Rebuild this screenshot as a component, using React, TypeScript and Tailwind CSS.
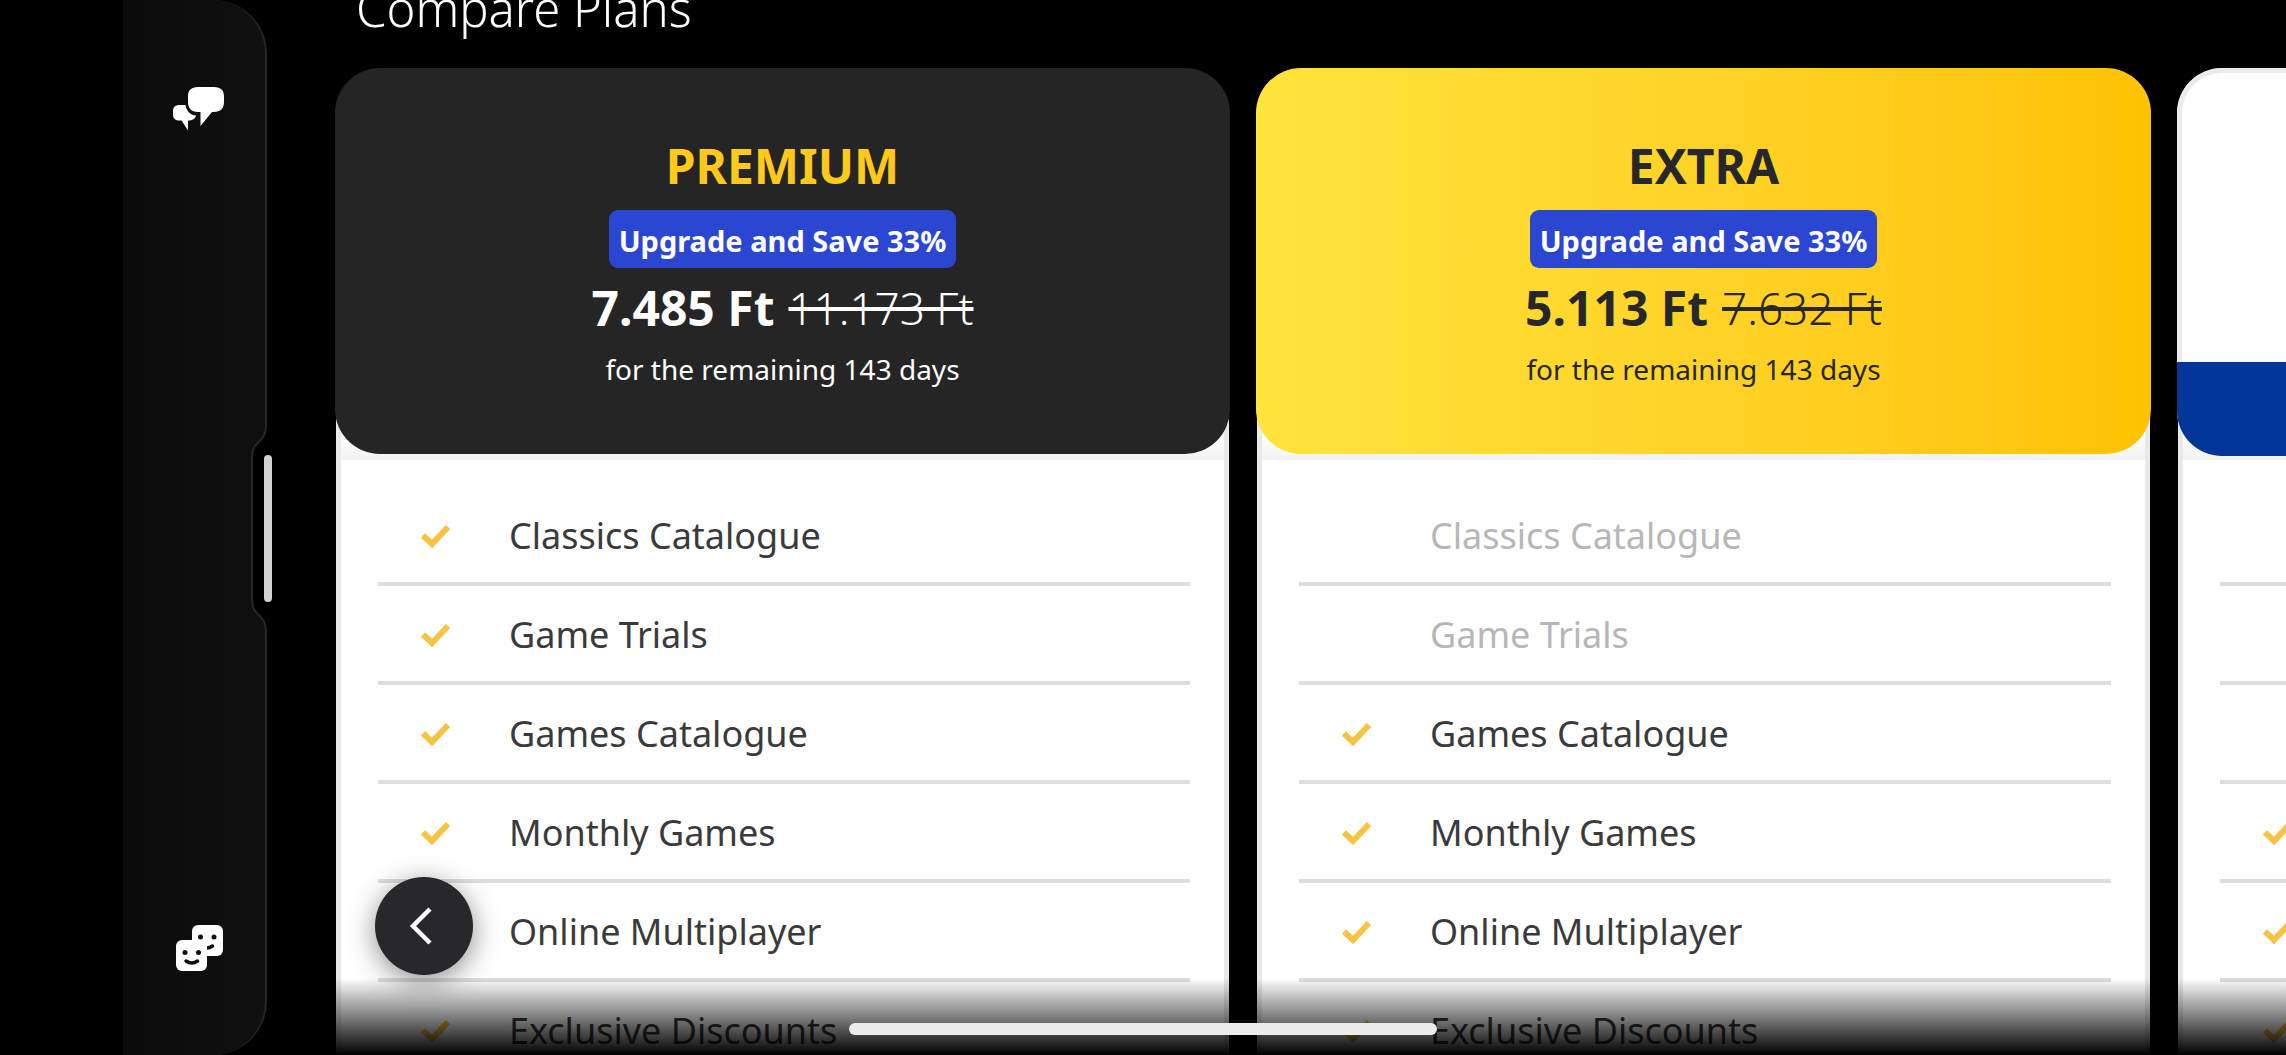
import React from "react";

type Plan = {
  name: string;
  tone: string;
  titleColor: string;
  price?: string;
  oldPrice?: string;
  included: number;
};

const FEATURES = [
  "Classics Catalogue",
  "Game Trials",
  "Games Catalogue",
  "Monthly Games",
  "Online Multiplayer",
  "Exclusive Discounts",
];

// `included` counts from the end of the feature list.
const PLANS: Plan[] = [
  {
    name: "PREMIUM",
    tone: "bg-[#252525] text-white",
    titleColor: "text-[#ffc91c]",
    price: "7.485 Ft",
    oldPrice: "11.173 Ft",
    included: 6,
  },
  {
    name: "EXTRA",
    tone: "bg-linear-to-r from-[#ffe43b] to-[#fec200] text-[#27272b]",
    titleColor: "text-[#27272b]",
    price: "5.113 Ft",
    oldPrice: "7.632 Ft",
    included: 4,
  },
  { name: "", tone: "", titleColor: "", included: 3 },
];

function ChatIcon() {
  return (
    <svg width="52" height="46" viewBox="173 86 52 46" fill="#fff" aria-hidden="true">
      <path d="M198 87h16c7 0 10 3.500 10 9.500v5.500c0 6.500-3.500 10-10 10h-2L200.500 126V112H198c-7 0-10-4-10-10v-5.500c0-6 3-9.500 10-9.500z" />
      <path d="M179.500 105H185.500C186.500 111 190 115 196 115.500C195.500 118.500 192.500 120.500 188 120.500V130.500L181.500 120.500H179.500C175.500 120.500 173 118.500 173 115v-4c0-4 2.500-6 6.500-6z" />
    </svg>
  );
}

function FacesIcon() {
  return (
    <svg width="48" height="48" viewBox="175 923 48 48" aria-hidden="true">
      <rect x="191" y="924" width="31" height="31" rx="6" fill="#fff" />
      <g fill="#0e0e0e">
        <circle cx="199.500" cy="936" r="2.500" />
        <circle cx="213" cy="936" r="2.500" />
      </g>
      <path d="M200 945q6 4 11.500 0" fill="none" stroke="#0e0e0e" strokeWidth="3.500" strokeLinecap="round" />
      <rect x="175" y="939" width="31" height="31" rx="6" fill="#fff" />
      <g fill="#0e0e0e">
        <circle cx="184" cy="951.500" r="2.500" />
        <circle cx="197.500" cy="951.500" r="2.500" />
      </g>
      <path d="M185 960q6 4 11.500 0" fill="none" stroke="#0e0e0e" strokeWidth="3.500" strokeLinecap="round" />
    </svg>
  );
}

function Check() {
  return (
    <svg width="30" height="24" viewBox="0 0 30 24" fill="none" stroke="#f6c343" strokeWidth="6" aria-label="Included">
      <path d="M2 11.500L11 20L27 3" />
    </svg>
  );
}

function SideRail() {
  return (
    <aside className="ml-[123px] flex h-full w-36 shrink-0 flex-col">
      <div className="flex flex-1 justify-center rounded-tr-[54px] border-r-2 border-[#26262b] bg-linear-to-r from-[#0b0b0b] to-[#101010] pt-[85px] pl-2.5">
        <button type="button" aria-label="Chat" className="h-12 w-[52px]">
          <ChatIcon />
        </button>
      </div>
      <div className="relative h-[211px]">
        <svg className="block" width="144" height="211" viewBox="0 0 144 211" aria-hidden="true">
          <defs>
            <linearGradient id="rail">
              <stop offset="0" stopColor="#0b0b0b" />
              <stop offset="1" stopColor="#101010" />
            </linearGradient>
          </defs>
          <path d="M0 0H143C143 24 129 14 129 36V175C129 197 143 187 143 211H0z" fill="url(#rail)" />
          <path d="M143 0C143 24 129 14 129 36V175C129 197 143 187 143 211" fill="none" stroke="#26262b" strokeWidth="2" />
        </svg>
        <span className="absolute top-8 -right-[5px] h-[147px] w-2 rounded-full bg-[#d2d2d2]" />
      </div>
      <div className="flex flex-1 items-end justify-center rounded-br-[54px] border-r-2 border-[#26262b] bg-linear-to-r from-[#0b0b0b] to-[#101010] pb-[83px] pl-3">
        <button type="button" aria-label="Friends" className="size-12">
          <FacesIcon />
        </button>
      </div>
    </aside>
  );
}

function PlanHeader({ plan }: { plan: Plan }) {
  if (!plan.price) {
    return (
      <header className="relative -mb-0.5 flex h-[388px] flex-col overflow-hidden rounded-[45px] bg-white">
        <div className="flex-1 rounded-t-[45px] border-5 border-b-0 border-[#ebebeb]" />
        <div className="h-[94px] bg-[#003698]" />
      </header>
    );
  }
  return (
    <header className={`relative flex flex-col items-center rounded-[45px] pt-[70px] pb-[65px] whitespace-nowrap ${plan.tone}`}>
      <h2 className={`text-[48px] leading-[56px] font-bold ${plan.titleColor}`}>{plan.name}</h2>
      <p className="mt-4 rounded-[9px] bg-[#2b46d0] px-2.5 pt-1 text-[29px] leading-[54px] font-bold text-white">
        Upgrade and Save 33%
      </p>
      <p className="mt-3 flex gap-3.5 text-[48px] leading-[56px]">
        <strong className="font-bold">{plan.price}</strong>
        <s className="text-[44px] font-light decoration-4">{plan.oldPrice}</s>
      </p>
      <p className="mt-[13px] text-[28px] leading-10">for the remaining 143 days</p>
    </header>
  );
}

function PlanCard({ plan }: { plan: Plan }) {
  return (
    <article className="flex w-[calc((100%-161px)/2)] shrink-0 flex-col">
      <PlanHeader plan={plan} />
      <div className="mx-px -mt-[52px] border-x-5 border-[#e9e9e9] bg-white">
        <div className="h-[58px] bg-linear-to-b from-white from-50% to-[#f3f3f3]" />
        <ul className="mr-[34px] ml-[37px] pt-[27px]">
          {FEATURES.map((feature, i) => {
            const on = i >= FEATURES.length - plan.included;
            return (
              <li
                key={feature}
                className={`flex h-[99px] items-center border-b-4 border-[#dedede] pt-[3px] text-[36px] whitespace-nowrap ${on ? "text-[#3a3a3c]" : "text-[#b7b7b7]"}`}
              >
                <span className="w-[131px] shrink-0 pl-[43px]">{on && <Check />}</span>
                {plan.name && feature}
              </li>
            );
          })}
        </ul>
      </div>
    </article>
  );
}

export default function App() {
  return (
    <div className="relative flex h-screen overflow-hidden bg-black font-['Noto_Sans','Open_Sans',sans-serif]">
      <SideRail />
      <main className="ml-[68px] min-w-0 flex-1">
        <h1 className="-mt-[26px] ml-[21px] text-[49px] leading-[68px] font-light text-white">Compare Plans</h1>
        <div className="mt-[26px] flex items-start gap-[26px]">
          {PLANS.map((plan, i) => (
            <PlanCard key={i} plan={plan} />
          ))}
        </div>
      </main>
      <button
        type="button"
        aria-label="Back"
        className="absolute bottom-20 left-[375px] flex size-[98px] items-center justify-center rounded-full bg-[#27272c] shadow-[0_6px_28px_rgba(0,0,0,0.45)]"
      >
        <svg className="mr-1.5" width="24" height="38" viewBox="0 0 24 38" fill="none" stroke="#fff" strokeWidth="4.500" aria-hidden="true">
          <path d="M21 2L4 19L21 36" />
        </svg>
      </button>
      <div className="pointer-events-none absolute right-0 bottom-0 left-[335px] h-[77px] bg-linear-to-b from-transparent to-black" />
      <div className="absolute bottom-5 left-1/2 h-3 w-[588px] -translate-x-1/2 rounded-full bg-[#ececec]" />
    </div>
  );
}
